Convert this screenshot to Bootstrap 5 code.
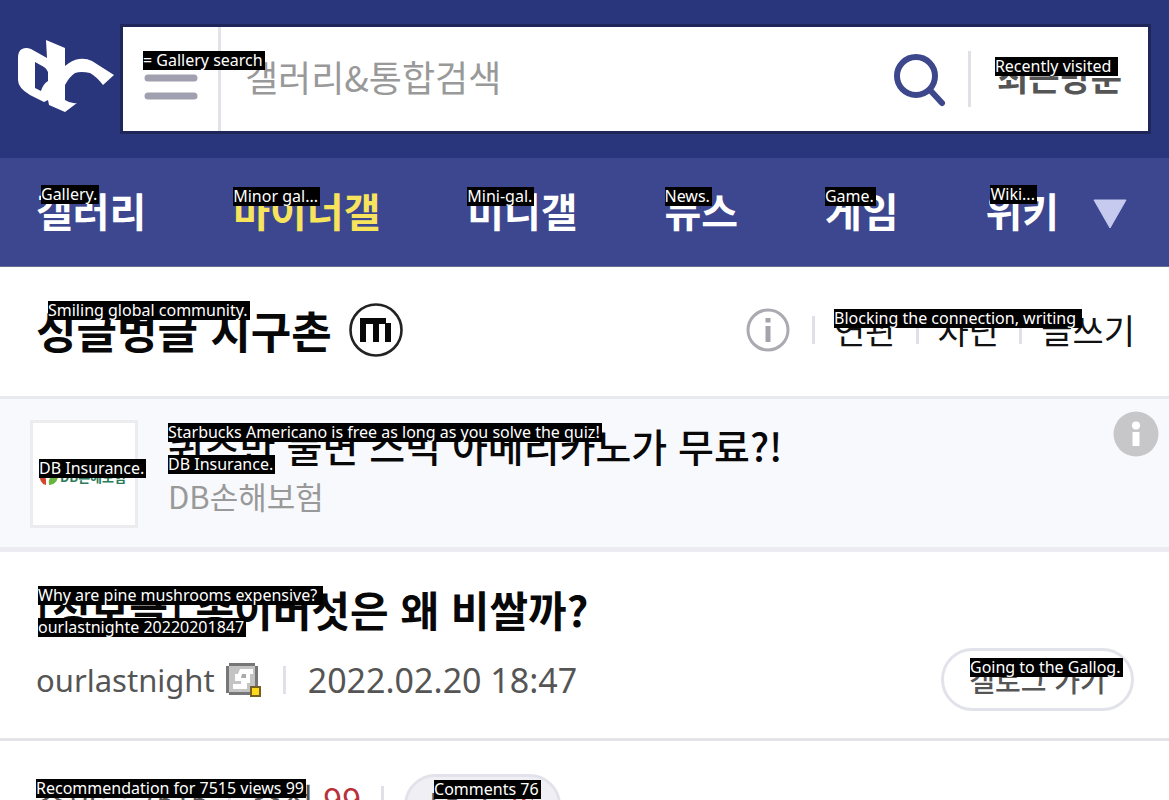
<!DOCTYPE html>
<html lang="ko">
<head>
<meta charset="utf-8">
<meta name="viewport" content="width=device-width, initial-scale=1">
<title>싱글벙글 지구촌</title>
<link href="https://cdn.jsdelivr.net/npm/bootstrap@5.3.0/dist/css/bootstrap.min.css" rel="stylesheet">
<style>
body{font-family:"Noto Sans","Noto Sans CJK KR",sans-serif;color:#111;background:#fff}
.ko{font-family:"Noto Sans CJK KR",sans-serif}
a{color:inherit;text-decoration:none}
.top-bar{background:#29367c;padding:24px 18px;gap:6px}
.logo{padding-bottom:4px}
.search-box{border:3px solid #1f2659;background:#fff;height:110px}
.menu-btn{width:98px;border:0;border-right:3px solid #e2e2e8;background:#fff;padding:0 21px}
.search-box input{border:0;outline:0;font-size:36px;padding:0 0 6px 24px;color:#555;min-width:0}
.search-box input::placeholder{color:#999;opacity:1}
.plain-btn{border:0;background:none;padding:0;color:inherit}
.find{margin-right:20px;padding-top:2px}
.recent{font-size:34px;line-height:50px;font-weight:700;color:#555;margin:0 26px;padding-bottom:4px}
.rule{width:3px;background:#e0e0e8;flex:none}
.short{height:28px}
.main-nav{background:#3c478f;border-bottom:1px solid #656b8c;height:109px;padding:0 42px 4px 36px;gap:34px;color:#fff}
.main-nav a{font-size:40px;line-height:58px;font-weight:700}
.main-nav svg{margin-top:8px}
.main-nav .current{color:#f7e45c}
.title-bar{height:132px;border-bottom:3px solid #e9e9f0;padding:0 34px 4px 36px}
.title-bar h1{font-size:44px;line-height:60px;font-weight:700;color:#080808}
.title-group{gap:16px}
.tools{gap:22px;font-size:34px;line-height:50px}
.tool-links{gap:19px}
.promo{background:#f8f9fc;border-bottom:5px solid #ebebf1;height:153px;padding:12px 10px 0 30px}
.thumb{width:108px;height:108px;border:3px solid #ececee;background:#fff;margin:9px 30px 0 0;padding:6px 5px 0}
.brand{font-size:13px;font-weight:700;color:#2d7a5b;white-space:nowrap}
.promo-text{padding-top:6px}
.promo h2{font-size:39px;line-height:56px;font-weight:500;color:#080808}
.sponsor{font-size:31px;line-height:46px;color:#999}
.post{height:189px;border-bottom:3px solid #e3e3e8;padding:25px 35px 0 36px}
.post h2{font-size:42px;line-height:64px;font-weight:700;color:#080808}
.meta{font-size:34px;line-height:46px;color:#555;padding-top:7px}
.author{font-size:31px}
.date-rule{margin:0 22px}
.pill{border:3px solid #e2e2ea;border-radius:32px;background:#fff;color:#555}
.gallog{width:193px;height:63px;font-size:28px;font-weight:500;line-height:56px}
.stats{padding:33px 36px 0;font-size:34px;line-height:50px;color:#555;height:59px;overflow:hidden;gap:20px}
.views,.replies .red{font-size:31px}
.stats .rule{margin-top:12px}
.red{color:#b8303a}
.replies{background:#f0f0f4;width:157px;height:63px;padding:0}
.tip{position:absolute;z-index:2;background:#000;color:#fff;font:400 16px/19px "Noto Sans",sans-serif;white-space:nowrap;text-align:left;padding-right:2px}
.t-menu{left:20px;top:24px}
.t-recent{left:-2px;top:5px}
.t-nav{left:0;top:6px}
.t-nav-in{left:5px;top:4px}
.t-title{left:12px;top:1px}
.t-tools{left:22px;top:4px}
.t-thumb{left:6px;top:36px}
.t-line{left:0;top:12px}
.t-under{left:0;top:44px}
.t-post{left:38px;top:34px}
.t-post2{left:38px;top:66px}
.t-gallog{left:26px;top:7px}
.t-stats{left:36px;top:38px}
.t-replies{left:27px;top:3px}
</style>
</head>
<body>
<header>
<div class="top-bar d-flex align-items-center">
<a href="#" aria-label="홈" class="logo d-flex"><svg width="96" height="74" viewBox="0 0 96 74" fill="#fff"><path fill-rule="evenodd" d="M28 0L47 8V26Q54 20 61 19Q68 18 74 21L96 35L85 45Q79 37 72 33Q63 31 57 33Q52 36 47 45V60Q53 64 59 63L47 72L31 65L30 60L26 62L12 55Q0 48 0 40V18Q0 11 4 9Q8 7 13 9L29 18ZM17 22V48L23 51Q25 44 30 41V32Q29 29 26 27Z"/></svg></a>
<form class="search-box d-flex align-items-stretch flex-grow-1" onsubmit="return false">
<button type="button" class="menu-btn position-relative" aria-label="메뉴"><svg width="54" height="48" viewBox="0 0 54 48" stroke="#a0a0b0" stroke-width="7" stroke-linecap="round"><path d="M4 4H50M4 23H50M4 41H50"/></svg><span class="tip t-menu">= Gallery search</span></button>
<input class="ko flex-grow-1" type="text" placeholder="갤러리&amp;통합검색" aria-label="갤러리 통합검색">
<button type="submit" class="plain-btn find" aria-label="검색"><svg width="56" height="58" viewBox="0 0 56 58" fill="none" stroke="#3c478c" stroke-linecap="round"><circle cx="24" cy="25" r="19" stroke-width="6"/><path d="M38 39L50 52" stroke-width="6"/></svg></button>
<span class="rule my-4"></span>
<button type="button" class="plain-btn recent ko position-relative align-self-center">최근방문<span class="tip t-recent">Recently visited&nbsp;</span></button>
</form>
</div>
<nav class="main-nav d-flex align-items-center ko">
<div class="d-flex justify-content-between flex-grow-1">
<a href="#" class="position-relative">갤러리<span class="tip t-nav-in">Gallery.</span></a>
<a href="#" class="position-relative current">마이너갤<span class="tip t-nav">Minor gal...</span></a>
<a href="#" class="position-relative">미니갤<span class="tip t-nav">Mini-gal.</span></a>
<a href="#" class="position-relative">뉴스<span class="tip t-nav">News.</span></a>
<a href="#" class="position-relative">게임<span class="tip t-nav">Game.</span></a>
<a href="#" class="position-relative">위키<span class="tip t-nav-in">Wiki...</span></a>
</div>
<button class="plain-btn d-flex" aria-label="더보기"><svg width="34" height="30" viewBox="0 0 34 30"><path d="M1 1H33L17 29Z" fill="#c6caef" stroke="#c6caef" stroke-linejoin="round"/></svg></button>
</nav>
</header>
<main>
<section class="title-bar d-flex align-items-center justify-content-between">
<div class="title-group d-flex align-items-center position-relative"><h1 class="ko m-0">싱글벙글 지구촌</h1>
<svg width="56" height="56" viewBox="0 0 56 56"><circle cx="28" cy="28" r="25.5" stroke="#222" stroke-width="2.6" fill="none"/><path d="M12 16H38V21H43V40H37V22H31V40H25V22H18V40H12Z" fill="#080808"/></svg>
<span class="tip t-title">Smiling global community.</span></div>
<div class="tools d-flex align-items-center ko">
<button class="plain-btn d-flex" aria-label="정보"><svg width="44" height="44" viewBox="0 0 44 44" fill="none"><circle cx="22" cy="22" r="20" stroke="#aaaab0" stroke-width="3"/><path d="M22 10V14.500M22 18V34" stroke="#a3a3ab" stroke-width="5"/></svg></button>
<div class="tool-links position-relative d-flex align-items-center"><span class="rule short"></span><a href="#">연관</a><span class="rule short"></span><a href="#">차단</a><span class="rule short"></span><a href="#">글쓰기</a><span class="tip t-tools">Blocking the connection, writing&nbsp;</span></div>
</div>
</section>
<section class="promo d-flex">
<div class="thumb position-relative d-flex align-items-center flex-shrink-0"><svg width="22" height="18" viewBox="0 0 22 18"><path d="M1 3Q9 5 8 17Q1 16 1 3Z" fill="#d4472f"/><path d="M20 1Q22 16 11 17Q9 9 20 1Z" fill="#66b53c"/></svg><span class="brand ko">DB손해보험</span><span class="tip t-thumb">DB Insurance.</span></div>
<a href="#" class="promo-text position-relative flex-grow-1"><h2 class="ko m-0">퀴즈만 풀면 스벅 아메리카노가 무료?!</h2><div class="sponsor ko">DB손해보험</div><span class="tip t-line">Starbucks Americano is free as long as you solve the quiz!</span><span class="tip t-under">DB Insurance.</span></a>
<button class="plain-btn align-self-start" aria-label="광고 정보"><svg class="d-block" width="46" height="46" viewBox="0 0 46 46"><circle cx="23" cy="23" r="22.500" fill="#c7c7c9"/><circle cx="23" cy="14.500" r="4" fill="#fff"/><path d="M19.500 21H26.500V35H19.500Z" fill="#fff"/></svg></button>
</section>
<article class="post position-relative">
<h2 class="ko m-0">[정보글] 송이버섯은 왜 비쌀까?</h2><span class="tip t-post">Why are pine mushrooms expensive?&nbsp;</span><span class="tip t-post2">ourlastnighte 20220201847</span>
<div class="meta d-flex align-items-center"><span class="author">ourlastnight</span>
<svg class="ms-2" width="38" height="36" viewBox="0 0 38 36"><g transform="translate(3)"><path d="M3 1H29V4H32V31H29V33H3V31H0V4H3Z" fill="#777"/><path d="M3 4H29V30H3Z" fill="#c4c4c4"/><path d="M14 7H27V12H24V21H21V27H7V22H15V19H9V12H12Z" fill="#fff"/><path d="M16 12H20V16H15Z" fill="#aaa"/><path d="M25 25H34V34H25Z" fill="#ffda1a" stroke="#765f22" stroke-width="2"/></g></svg>
<span class="rule short date-rule"></span><time>2022.02.20 18:47</time>
<button class="pill gallog ko ms-auto position-relative p-0">갤로그 가기<span class="tip t-gallog">Going to the Gallog.</span></button></div>
</article>
<section class="stats d-flex position-relative ko"><span>조회수 <span class="views">7515</span></span><span class="rule"></span><span>추천 <span class="red">99</span></span><span class="rule"></span><button class="pill replies position-relative">댓글 <span class="red">76</span><span class="tip t-replies">Comments 76</span></button><span class="tip t-stats">Recommendation for 7515 views 99</span></section>
</main>
<script src="https://cdn.jsdelivr.net/npm/bootstrap@5.3.0/dist/js/bootstrap.bundle.min.js"></script>
</body>
</html>
